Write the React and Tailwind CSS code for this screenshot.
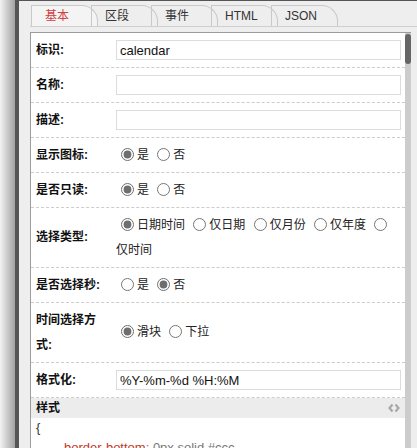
import React from "react";

const tabs = ["基本", "区段", "事件", "HTML", "JSON"];

function Radio({ checked, label }) {
  return (
    <>
      <label className="cursor-default">
        <input
          type="radio"
          checked={checked}
          readOnly
          className="ml-[5px] mr-[3px] h-[13px] w-[13px] align-[-2px] accent-[#6e6e6e]"
        />
        {label}
      </label>{" "}
    </>
  );
}

function Row({ label, children }) {
  return (
    <div className="flex min-h-[35px] items-center border-b border-dashed border-[#cccccc] py-[4.5px]">
      <div className="w-[85px] shrink-0 pl-[5px] pr-[9px] text-[12px] font-bold leading-[25px] text-[#111]">
        {label}
      </div>
      <div className="min-w-0 flex-1 pr-[4px] text-[12px] leading-[25px] text-[#222]">
        {children}
      </div>
    </div>
  );
}

function TextInput({ value = "" }) {
  return (
    <input
      readOnly
      value={value}
      className="block h-[20px] w-full border border-[#dcdcdc] px-[3px] text-[13px] text-[#111] outline-none"
    />
  );
}

export default function App() {
  return (
    <div className="flex h-[448px] w-[417px] overflow-hidden bg-[#eeeeee] font-['Liberation_Sans','Noto_Sans_CJK_SC',sans-serif]">
      <div className="w-[15px] shrink-0 bg-gradient-to-r from-[#f3f3f3] to-[#a2a2a2]" />
      <div className="w-[4px] shrink-0 bg-[#555555]" />
      <div className="flex min-w-0 flex-1 flex-col border-t border-[#555555] pl-[11px]">
        {/* tabs */}
        <div className="flex h-[26px] shrink-0 items-end border-b border-[#cfcfcf] pl-[1px]">
          {tabs.map((t, i) => (
            <div
              key={t}
              className={
                "flex h-[21px] w-[67px] shrink-0 items-center rounded-tr-[16px] border-l border-r border-t border-[#c9c9c9] pl-[13px] text-[12px] " +
                (i === 0 ? "bg-[#f4f4f4] text-[#d0413f]" : "-ml-[7px] text-[#333]")
              }
            >
              {t}
            </div>
          ))}
        </div>

        {/* panel */}
        <div className="mr-[6px] mt-[5px] flex min-h-0 flex-1 border-l border-t border-[#9c9c9c]">
          <div className="min-w-0 flex-1 bg-white">
            <Row label="标识:">
              <TextInput value="calendar" />
            </Row>
            <Row label="名称:">
              <TextInput />
            </Row>
            <Row label="描述:">
              <TextInput />
            </Row>
            <Row label="显示图标:">
              <Radio checked label="是" />
              <Radio label="否" />
            </Row>
            <Row label="是否只读:">
              <Radio checked label="是" />
              <Radio label="否" />
            </Row>
            <Row label="选择类型:">
              <Radio checked label="日期时间" />
              <Radio label="仅日期" />
              <Radio label="仅月份" />
              <Radio label="仅年度" />
              <Radio label="仅时间" />
            </Row>
            <Row label="是否选择秒:">
              <Radio label="是" />
              <Radio checked label="否" />
            </Row>
            <Row label="时间选择方式:">
              <Radio checked label="滑块" />
              <Radio label="下拉" />
            </Row>
            <Row label="格式化:">
              <TextInput value="%Y-%m-%d %H:%M" />
            </Row>

            {/* style header */}
            <div className="flex h-[20px] items-center justify-between bg-[#ececec] pl-[5px] pr-[5px]">
              <span className="text-[12px] font-bold text-[#111]">样式</span>
              <svg width="12" height="10" viewBox="0 0 12 10" fill="none" stroke="#a8a8a8" strokeWidth="2.2">
                <path d="M4.5 1.5 1.5 5l3 3.5" />
                <path d="M7.5 1.5 10.5 5l-3 3.5" />
              </svg>
            </div>
            <div className="pl-[5px] text-[13px] leading-[20px] text-[#333]">
              <div>{"{"}</div>
              <div className="pl-[28px]">
                <span className="text-[#c0392b]">border-bottom</span>
                <span className="text-[#777]">: 0px solid #ccc</span>
              </div>
              <div>{"}"}</div>
            </div>
          </div>

          {/* scrollbar */}
          <div className="relative w-[6px] shrink-0 bg-[#cccccc]">
            <div className="absolute left-0 top-[1px] h-[30px] w-[6px] rounded-[3px] bg-[#666666]" />
          </div>
        </div>
      </div>
    </div>
  );
}
